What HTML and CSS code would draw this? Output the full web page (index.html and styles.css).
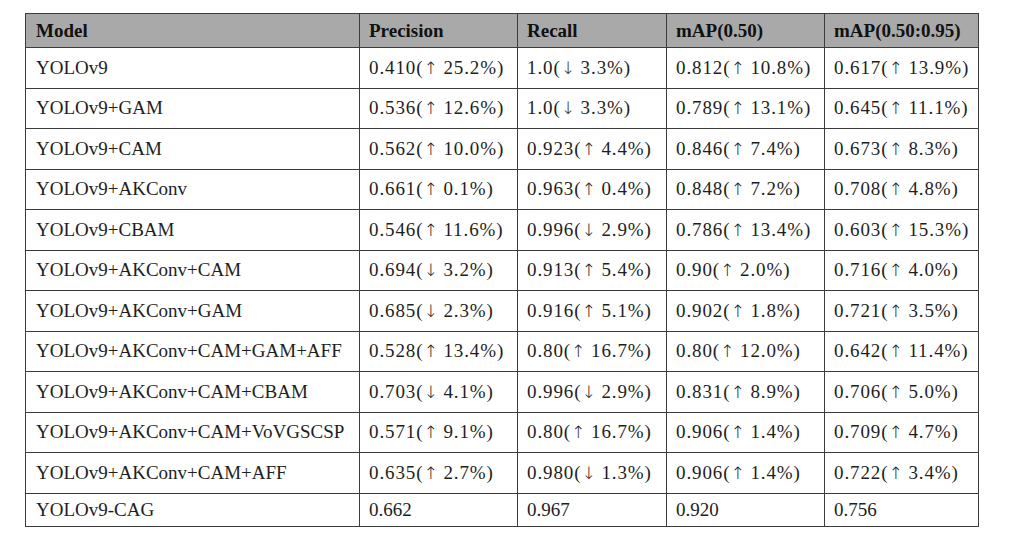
FILE: index.html
```html
<!DOCTYPE html>
<html>
<head>
<meta charset="utf-8">
<link rel="stylesheet" href="styles.css">
</head>
<body>
<table class="results">
  <colgroup>
    <col class="c-model"><col class="c-prec"><col class="c-rec"><col class="c-map"><col class="c-map2">
  </colgroup>
  <thead>
    <tr class="head"><th>Model</th><th>Precision</th><th>Recall</th><th>mAP(0.50)</th><th>mAP(0.50:0.95)</th></tr>
  </thead>
  <tbody>
    <tr><td>YOLOv9</td><td class="m">0.410(<span class="ar">↑</span> 25.2%)</td><td class="m">1.0(<span class="ar">↓</span> 3.3%)</td><td class="m">0.812(<span class="ar">↑</span> 10.8%)</td><td class="m">0.617(<span class="ar">↑</span> 13.9%)</td></tr>
    <tr><td>YOLOv9+GAM</td><td class="m">0.536(<span class="ar">↑</span> 12.6%)</td><td class="m">1.0(<span class="ar">↓</span> 3.3%)</td><td class="m">0.789(<span class="ar">↑</span> 13.1%)</td><td class="m">0.645(<span class="ar">↑</span> 11.1%)</td></tr>
    <tr><td>YOLOv9+CAM</td><td class="m">0.562(<span class="ar">↑</span> 10.0%)</td><td class="m">0.923(<span class="ar">↑</span> 4.4%)</td><td class="m">0.846(<span class="ar">↑</span> 7.4%)</td><td class="m">0.673(<span class="ar">↑</span> 8.3%)</td></tr>
    <tr><td>YOLOv9+AKConv</td><td class="m">0.661(<span class="ar">↑</span> 0.1%)</td><td class="m">0.963(<span class="ar">↑</span> 0.4%)</td><td class="m">0.848(<span class="ar">↑</span> 7.2%)</td><td class="m">0.708(<span class="ar">↑</span> 4.8%)</td></tr>
    <tr><td>YOLOv9+CBAM</td><td class="m">0.546(<span class="ar">↑</span> 11.6%)</td><td class="m">0.996(<span class="ar">↓</span> 2.9%)</td><td class="m">0.786(<span class="ar">↑</span> 13.4%)</td><td class="m">0.603(<span class="ar">↑</span> 15.3%)</td></tr>
    <tr><td>YOLOv9+AKConv+CAM</td><td class="m">0.694(<span class="ar">↓</span> 3.2%)</td><td class="m">0.913(<span class="ar">↑</span> 5.4%)</td><td class="m">0.90(<span class="ar">↑</span> 2.0%)</td><td class="m">0.716(<span class="ar">↑</span> 4.0%)</td></tr>
    <tr><td>YOLOv9+AKConv+GAM</td><td class="m">0.685(<span class="ar">↓</span> 2.3%)</td><td class="m">0.916(<span class="ar">↑</span> 5.1%)</td><td class="m">0.902(<span class="ar">↑</span> 1.8%)</td><td class="m">0.721(<span class="ar">↑</span> 3.5%)</td></tr>
    <tr><td>YOLOv9+AKConv+CAM+GAM+AFF</td><td class="m">0.528(<span class="ar">↑</span> 13.4%)</td><td class="m">0.80(<span class="ar">↑</span> 16.7%)</td><td class="m">0.80(<span class="ar">↑</span> 12.0%)</td><td class="m">0.642(<span class="ar">↑</span> 11.4%)</td></tr>
    <tr><td>YOLOv9+AKConv+CAM+CBAM</td><td class="m">0.703(<span class="ar">↓</span> 4.1%)</td><td class="m">0.996(<span class="ar">↓</span> 2.9%)</td><td class="m">0.831(<span class="ar">↑</span> 8.9%)</td><td class="m">0.706(<span class="ar">↑</span> 5.0%)</td></tr>
    <tr><td>YOLOv9+AKConv+CAM+VoVGSCSP</td><td class="m">0.571(<span class="ar">↑</span> 9.1%)</td><td class="m">0.80(<span class="ar">↑</span> 16.7%)</td><td class="m">0.906(<span class="ar">↑</span> 1.4%)</td><td class="m">0.709(<span class="ar">↑</span> 4.7%)</td></tr>
    <tr><td>YOLOv9+AKConv+CAM+AFF</td><td class="m">0.635(<span class="ar">↑</span> 2.7%)</td><td class="m">0.980(<span class="ar">↓</span> 1.3%)</td><td class="m">0.906(<span class="ar">↑</span> 1.4%)</td><td class="m">0.722(<span class="ar">↑</span> 3.4%)</td></tr>
    <tr class="last"><td>YOLOv9-CAG</td><td>0.662</td><td>0.967</td><td>0.920</td><td>0.756</td></tr>
  </tbody>
</table>
</body>
</html>
```

FILE: styles.css
```css
html, body {
  margin: 0;
  background: #ffffff;
}
body {
  padding: 13px 0 0 25px;
  font-family: "Liberation Serif", "Times New Roman", serif;
  color: #1e1e1e;
}
.results {
  border-collapse: collapse;
  table-layout: fixed;
  width: 953px;
  font-size: 19px;
}
.c-model { width: 334px; }
.c-prec { width: 158px; }
.c-rec { width: 149px; }
.c-map { width: 158px; }
.c-map2 { width: 154px; }
.results th,
.results td {
  border: 1px solid #3c3c3c;
  padding: 0 0 0 9px;
  text-align: left;
  vertical-align: middle;
  white-space: nowrap;
}
.results td:first-child,
.results th:first-child {
  padding-left: 10px;
}
.head {
  height: 34px;
  background: #a9a9a9;
}
.head th {
  font-weight: bold;
  color: #111;
  padding-top: 1px;
}
.results tbody tr {
  height: 40.5px;
}
.results tbody tr.last {
  height: 33px;
}
.m {
  letter-spacing: 0.9px;
  padding-top: 2px;
}
.ar {
  font-family: "DejaVu Sans", sans-serif;
  font-size: 17px;
  font-weight: 300;
  letter-spacing: 0;
}
```
